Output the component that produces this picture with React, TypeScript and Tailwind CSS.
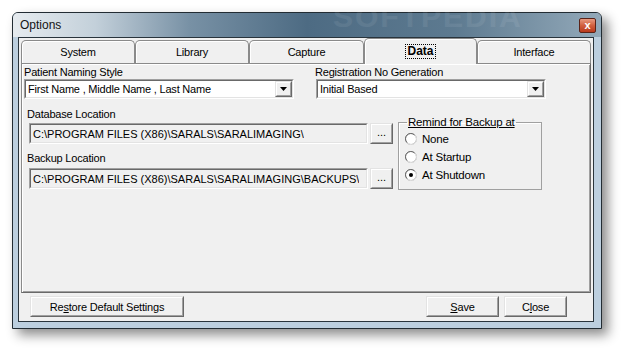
import type { ReactNode } from "react";

const tabs = [
  { label: "System", width: "w-[114px]" },
  { label: "Library", width: "w-[114px]" },
  { label: "Capture", width: "w-[115px]" },
  { label: "Data", width: "w-[113px]", active: true },
  { label: "Interface", width: "w-[114px]" },
];

function Sunken({ className, inner, children }: { className: string; inner: string; children: ReactNode }) {
  return (
    <div className={`border border-t-[#a0a0a0] border-l-[#a0a0a0] border-b-white border-r-white ${className}`}>
      <div className={`flex h-full items-center border border-t-[#696969] border-l-[#696969] border-b-[#e3e3e3] border-r-[#e3e3e3] ${inner}`}>
        {children}
      </div>
    </div>
  );
}

function Raised({ className, children }: { className: string; children: ReactNode }) {
  return (
    <div className={`border border-t-[#e3e3e3] border-l-[#e3e3e3] border-b-[#696969] border-r-[#696969] ${className}`}>
      <div className="flex h-full items-center justify-center border border-t-white border-l-white border-b-[#a0a0a0] border-r-[#a0a0a0] bg-[#f0f0f0]">
        {children}
      </div>
    </div>
  );
}

function Combo({ value, width }: { value: string; width: string }) {
  return (
    <Sunken className={`h-[20px] ${width}`} inner="bg-white">
      <span className="flex-1 truncate pl-[2px] tracking-[-0.2px]">{value}</span>
      <Raised className="h-full w-[17px]">
        <svg width="7" height="4" viewBox="0 0 7 4">
          <path d="M0 0h7L3.5 4z" fill="#000" />
        </svg>
      </Raised>
    </Sunken>
  );
}

function PathField({ value }: { value: string }) {
  return (
    <div className="flex items-center">
      <Sunken className="ml-[2px] h-[21px] w-[339px]" inner="bg-[#f0f0f0]">
        <span className="truncate pl-[2px]">{value}</span>
      </Sunken>
      <Raised className="ml-[2px] h-[21px] w-[23px]">
        <span className="pb-[4px]">...</span>
      </Raised>
    </div>
  );
}

function Radio({ label, checked }: { label: string; checked?: boolean }) {
  return (
    <div className="flex h-[18px] items-center">
      <svg width="12" height="12" viewBox="0 0 12 12" className="ml-[6px]">
        <circle cx="6" cy="6" r="5.5" fill="#fff" stroke="#a0a0a0" />
        <path d="M2 9.5A5 5 0 0 1 9.5 2" stroke="#696969" fill="none" />
        <path d="M2.5 10A5 5 0 0 0 10 2.5" stroke="#e3e3e3" fill="none" />
        {checked ? <circle cx="6" cy="6" r="2" fill="#000" /> : null}
      </svg>
      <span className="ml-[5px]">{label}</span>
    </div>
  );
}

export default function App() {
  return (
    <div className="h-[348px] w-[622px] overflow-hidden bg-white pl-[12px] pt-[12px] font-['Liberation_Sans',Arial,sans-serif] text-[11px] leading-[14px] text-black">
      <div className="flex h-[317px] w-[590px] flex-col rounded-t-[6px] border border-[#222c33] bg-[#bccfdf] shadow-[6px_6px_12px_rgba(0,0,0,0.45)]">
        <div className="relative flex h-[24px] items-center justify-between rounded-t-[5px] bg-[linear-gradient(90deg,#e6ebef_0%,#c3d0da_14%,#7891a5_30%,#4d6b83_50%,#5d7a90_75%,#93a9b9_100%)] pl-[7px] pr-[5px]">
          <span className="text-[12px] text-[#141414]">Options</span>
          <span className="pointer-events-none absolute left-[320px] top-[-3px] text-[30px] font-bold tracking-[2px] text-white/[0.07]">SOFTPEDIA</span>
          <div className="flex h-[15px] w-[17px] items-center justify-center rounded-[2px] border border-[#5a2318] bg-[linear-gradient(180deg,#e89a80_0%,#d1603f_50%,#b8391c_100%)] text-[11px] font-bold leading-none text-white">
            x
          </div>
        </div>
        <div className="mx-[5px] mb-[6px] mr-[7px] flex flex-1 flex-col border border-[#29343c] bg-[#f0f0f0] tracking-[-0.2px]">
          <div className="ml-[2px] flex h-[25px] items-end">
            {tabs.map((tab) =>
              tab.active ? (
                <div
                  key={tab.label}
                  className={`relative z-10 -mb-px flex h-[26px] ${tab.width} justify-center rounded-t-[5px] border border-b-0 border-[#8a8a8a] bg-[#f0f0f0] pt-[5px] shadow-[inset_1px_1px_0_white]`}
                >
                  <span className="h-[15px] border border-dotted border-black px-[1px] text-[12px] font-bold leading-[13px] tracking-normal">{tab.label}</span>
                </div>
              ) : (
                <div
                  key={tab.label}
                  className={`flex h-[23px] ${tab.width} justify-center rounded-t-[5px] border border-b-0 border-[#8a8a8a] bg-[#f0f0f0] pt-[4px] shadow-[inset_1px_1px_0_white]`}
                >
                  {tab.label}
                </div>
              ),
            )}
          </div>
          <div className="ml-[2px] h-[230px] w-[570px] border border-t-[#8a8a8a] border-l-[#8a8a8a] border-b-[#696969] border-r-[#696969] pl-[2px] pt-[1px] shadow-[inset_1px_1px_0_white,inset_-1px_-1px_0_#a0a0a0]">
            <div className="flex">
              <div className="w-[270px]">
                <div className="h-[14px]">Patient Naming Style</div>
                <Combo value="First Name , Middle Name , Last Name" width="w-[270px]" />
              </div>
              <div className="ml-[21px]">
                <div className="h-[14px]">Registration No Generation</div>
                <div className="ml-[1px]">
                  <Combo value="Initial Based" width="w-[230px]" />
                </div>
              </div>
            </div>
            <div className="flex">
              <div className="ml-[3px]">
                <div className="mt-[8px] h-[14px]">Database Location</div>
                <div className="mt-[2px] tracking-normal">
                  <PathField value="C:\PROGRAM FILES (X86)\SARALS\SARALIMAGING\" />
                </div>
                <div className="mt-[7px] h-[14px]">Backup Location</div>
                <div className="mt-[3px] tracking-normal">
                  <PathField value="C:\PROGRAM FILES (X86)\SARALS\SARALIMAGING\BACKUPS\" />
                </div>
              </div>
              <fieldset className="ml-[5px] mt-[16px] h-[75px] w-[144px] border border-[#a0a0a0] pb-[4px] shadow-[inset_1px_1px_0_white]">
                <legend className="ml-[8px] px-[1px] text-[11.5px] underline">Remind for Backup at</legend>
                <div className="mt-[1px] text-[11.5px]">
                  <Radio label="None" />
                  <Radio label="At Startup" />
                  <Radio label="At Shutdown" checked />
                </div>
              </fieldset>
            </div>
          </div>
          <div className="mt-[3px] flex">
            <Raised className="ml-[11px] h-[21px] w-[154px]">
              <span>
                Re<span className="underline">s</span>tore Default Settings
              </span>
            </Raised>
            <div className="ml-auto mr-[26px] flex gap-[5px]">
              <Raised className="h-[21px] w-[73px]">
                <span>
                  <span className="underline">S</span>ave
                </span>
              </Raised>
              <Raised className="h-[21px] w-[63px]">
                <span>
                  C<span className="underline">l</span>ose
                </span>
              </Raised>
            </div>
          </div>
        </div>
      </div>
    </div>
  );
}
